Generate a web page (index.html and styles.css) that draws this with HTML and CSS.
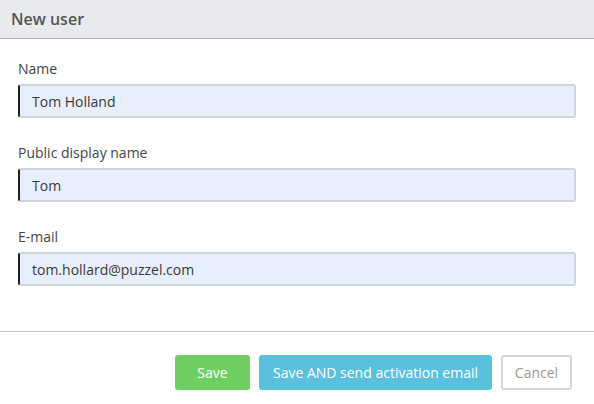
FILE: index.html
```html
<!DOCTYPE html>
<html>
<head>
<meta charset="utf-8">
<link rel="stylesheet" href="styles.css">
</head>
<body>
<div class="dialog">
  <div class="header">New user</div>
  <div class="form">
    <div class="field">
      <label class="label">Name</label>
      <div class="input">Tom Holland</div>
    </div>
    <div class="field">
      <label class="label">Public display name</label>
      <div class="input">Tom</div>
    </div>
    <div class="field">
      <label class="label">E-mail</label>
      <div class="input">tom.hollard@puzzel.com</div>
    </div>
  </div>
  <div class="footer">
    <button class="btn btn-save">Save</button>
    <button class="btn btn-send">Save AND send activation email</button>
    <button class="btn btn-cancel">Cancel</button>
  </div>
</div>
</body>
</html>
```
FILE: styles.css
```css
html, body {
  margin: 0;
  padding: 0;
  background: #fff;
  font-family: "Open Sans", "Liberation Sans", sans-serif;
}
.dialog {
  width: 594px;
  height: 404px;
  display: flex;
  flex-direction: column;
}
.header {
  height: 39px;
  box-sizing: border-box;
  background: #e9eaee;
  border-bottom: 1px solid #b8b8b8;
  padding: 0 11px 1px;
  display: flex;
  align-items: center;
  font-size: 16px;
  font-weight: 600;
  color: #555;
}
.form {
  padding: 19px 18px 0 18px;
  display: flex;
  flex-direction: column;
  gap: 24px;
  height: 293px;
  box-sizing: border-box;
  border-bottom: 1px solid #c8c8c8;
}
.field {
  display: flex;
  flex-direction: column;
  gap: 5px;
}
.label {
  font-size: 14px;
  line-height: 21px;
  color: #444;
}
.input {
  height: 34px;
  box-sizing: border-box;
  background: #e8effc;
  border: 2px solid #cfd4db;
  border-left: 2px solid #222;
  border-radius: 3px;
  padding: 0 12px;
  display: flex;
  align-items: center;
  font-size: 14px;
  color: #3a3a3a;
}
.footer {
  display: flex;
  justify-content: flex-end;
  gap: 9px;
  padding: 23px 22px 0 0;
}
.btn {
  height: 35px;
  box-sizing: border-box;
  border-radius: 3px;
  font-family: "Open Sans", "Liberation Sans", sans-serif;
  font-size: 14px;
  padding: 0 10px;
  border: none;
  color: #fff;
}
.btn-save {
  width: 75px;
  background: #6fcf63;
}
.btn-send {
  width: 233px;
  background: #5bc0de;
}
.btn-cancel {
  width: 71px;
  background: #fff;
  border: 2px solid #d6d6d6;
  color: #999;
}
```
